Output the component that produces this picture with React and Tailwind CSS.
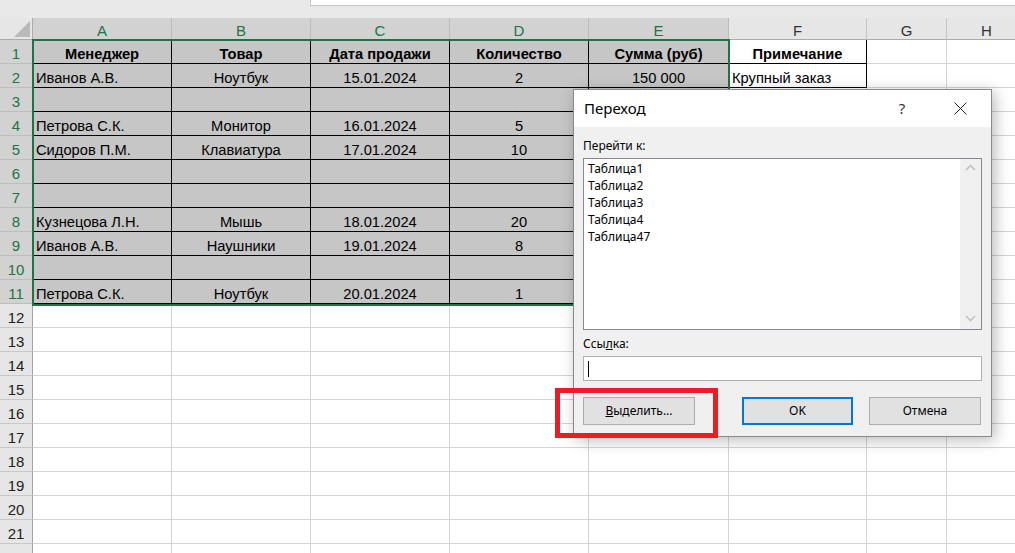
import React from 'react';

const cols = [
  { name: 'A', w: 'w-[139px]', align: 'justify-start pl-[3px]' },
  { name: 'B', w: 'w-[139px]', align: 'justify-center' },
  { name: 'C', w: 'w-[139px]', align: 'justify-center' },
  { name: 'D', w: 'w-[139px]', align: 'justify-center' },
  { name: 'E', w: 'w-[140px]', align: 'justify-center' },
  { name: 'F', w: 'w-[138px]', align: 'justify-start pl-[3px]' },
  { name: 'G', w: 'w-[80px]', align: 'justify-start' },
  { name: 'H', w: 'w-[80px]', align: 'justify-start' },
];

const data = {
  1: ['Менеджер', 'Товар', 'Дата продажи', 'Количество', 'Сумма (руб)', 'Примечание'],
  2: ['Иванов А.В.', 'Ноутбук', '15.01.2024', '2', '150 000', 'Крупный заказ'],
  4: ['Петрова С.К.', 'Монитор', '16.01.2024', '5', '', ''],
  5: ['Сидоров П.М.', 'Клавиатура', '17.01.2024', '10', '', ''],
  8: ['Кузнецова Л.Н.', 'Мышь', '18.01.2024', '20', '', ''],
  9: ['Иванов А.В.', 'Наушники', '19.01.2024', '8', '', ''],
  11: ['Петрова С.К.', 'Ноутбук', '20.01.2024', '1', '', ''],
};

const rows = Array.from({ length: 22 }, (_, i) => i + 1);
const cellFont = { fontFamily: '"Liberation Sans", Arial, sans-serif' };

function Cell({ row, ci }) {
  const col = cols[ci];
  const inTable = row <= 11 && ci < 5;
  const note = ci === 5 && row <= 2;
  const value = (data[row] && data[row][ci]) || '';
  const border = inTable || note ? 'border-black' : 'border-[#d4d4d4]';
  const bg = inTable ? 'bg-[#c6c6c6]' : 'bg-white';
  const align = row === 1 ? 'justify-center font-bold' : col.align;
  return (
    <div className={`${col.w} h-full shrink-0 flex items-center pt-[5px] border-r border-b ${border} ${bg} ${align} text-[14.7px] text-black whitespace-nowrap overflow-hidden`}>
      {value}
    </div>
  );
}

function Chevron({ up }) {
  return (
    <svg width="11" height="7" viewBox="0 0 11 7">
      <polyline
        points={up ? '1,6 5.5,1.5 10,6' : '1,1 5.5,5.5 10,1'}
        fill="none"
        stroke="#c2c2c2"
        strokeWidth="1.6"
      />
    </svg>
  );
}

function Dialog() {
  const items = ['Таблица1', 'Таблица2', 'Таблица3', 'Таблица4', 'Таблица47'];
  return (
    <div
      className="absolute left-[573px] top-[89px] w-[419px] h-[348px] border border-[#8a8a8a] bg-[#f0f0f0] shadow-[3px_3px_14px_rgba(0,0,0,0.28)] flex flex-col text-[12px] text-black"
      style={{ fontFamily: '"Noto Sans", "Open Sans", sans-serif' }}
    >
      <div className="h-[37px] bg-white flex items-center pl-[10px] shrink-0">
        <span className="flex-1 text-[15px]">Переход</span>
        <span className="w-[20px] text-center text-[15px] text-[#333]">?</span>
        <svg className="ml-[42px] mr-[24px]" width="13" height="13" viewBox="0 0 13 13">
          <path d="M0.5 0.5 L12.5 12.5 M12.5 0.5 L0.5 12.5" stroke="#222" strokeWidth="1" />
        </svg>
      </div>
      <div className="flex flex-col px-[9px] pt-[11px]">
        <div className="h-[16px] leading-[16px]">Перейти к:</div>
        <div className="mt-[4px] h-[172px] border border-[#828790] bg-white flex">
          <div className="flex-1 flex flex-col pl-[4px] pt-[1px]">
            {items.map((t) => (
              <div key={t} className="h-[17px] leading-[17px]">{t}</div>
            ))}
          </div>
          <div className="w-[21px] bg-[#f0f0f0] flex flex-col items-center justify-between pt-[5px] pb-[7px]">
            <Chevron up />
            <Chevron />
          </div>
        </div>
        <div className="mt-[6px] h-[16px] leading-[16px]">
          Ссы<span className="underline">л</span>ка:
        </div>
        <div className="mt-[4px] h-[25px] border border-[#b0b0b0] bg-white flex items-center pl-[4px]">
          <div className="w-[1px] h-[16px] bg-black" />
        </div>
        <div className="mt-[16px] flex h-[28px]">
          <div className="w-[112px] h-full border border-[#adadad] bg-[#e1e1e1] flex items-center justify-center">
            <span><span className="underline">В</span>ыделить...</span>
          </div>
          <div className="ml-[47px] w-[111px] h-full border-2 border-[#0078d7] bg-[#e1e1e1] flex items-center justify-center">
            OK
          </div>
          <div className="ml-[16px] w-[112px] h-full border border-[#adadad] bg-[#e1e1e1] flex items-center justify-center">
            Отмена
          </div>
        </div>
      </div>
    </div>
  );
}

export default function App() {
  return (
    <div className="relative w-[1015px] h-[553px] overflow-hidden bg-white" style={cellFont}>
      {/* formula bar strip */}
      <div className="h-[18px] bg-[#e9e9e9] flex">
        <div className="w-[310px]" />
        <div className="flex-1 h-[6px] bg-white border-l border-b border-[#c6c6c6]" />
      </div>

      {/* column headers */}
      <div className="h-[22px] flex">
        <div className="w-[33px] h-full shrink-0 bg-[#e6e6e6] border-r border-b border-[#ababab] relative">
          <svg className="absolute right-[2px] bottom-[2px]" width="16" height="16" viewBox="0 0 16 16">
            <polygon points="16,0 16,16 0,16" fill="#b9b9b9" />
          </svg>
        </div>
        {cols.map((c, i) => (
          <div
            key={c.name}
            className={`${c.w} h-full shrink-0 flex items-center justify-center pt-[6px] text-[15px] border-r border-b ${
              i < 5
                ? 'bg-[#d2d2d2] text-[#217346] border-r-[#bdbdbd] border-b-[#217346]'
                : 'bg-[#e6e6e6] text-[#333] border-[#c4c4c4] border-b-[#ababab]'
            }`}
          >
            {c.name}
          </div>
        ))}
      </div>

      {/* rows */}
      {rows.map((r) => (
        <div key={r} className="h-[24px] flex">
          <div
            className={`w-[33px] h-full shrink-0 flex items-center justify-center pt-[5px] text-[15px] border-b border-r ${
              r <= 11
                ? 'bg-[#d2d2d2] text-[#217346] border-b-[#bdbdbd] border-r-[#217346]'
                : 'bg-[#e6e6e6] text-[#222] border-b-[#c8c8c8] border-r-[#a5a5a5]'
            }`}
          >
            {r <= 21 ? r : ''}
          </div>
          {cols.map((c, ci) => (
            <Cell key={c.name} row={r} ci={ci} />
          ))}
        </div>
      ))}

      {/* selection outline */}
      <div className="absolute left-[32px] top-[39px] w-[698px] h-[267px] border-2 border-[#217346] pointer-events-none" />

      <Dialog />

      {/* red highlight */}
      <div className="absolute left-[555px] top-[388px] w-[163px] h-[50px] border-[5px] border-[#ed1c24] pointer-events-none" />
    </div>
  );
}
